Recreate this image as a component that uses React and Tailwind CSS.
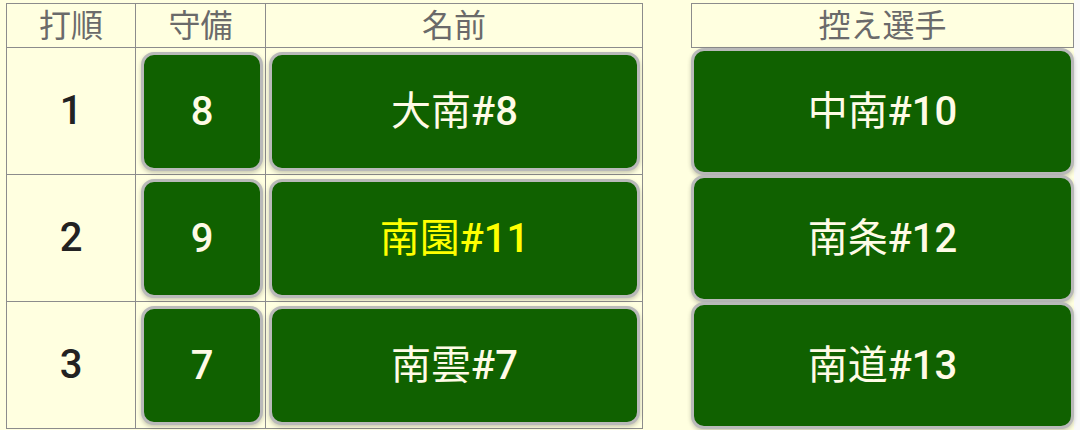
import React from 'react';

const font = { fontFamily: 'Roboto, "Noto Sans CJK JP", sans-serif' };

const lineup = [
  { order: 1, pos: '8', name: '大南#8' },
  { order: 2, pos: '9', name: '南園#11', active: true },
  { order: 3, pos: '7', name: '南雲#7' },
];

const bench = ['中南#10', '南条#12', '南道#13'];

// 漢字は細め、番号は少し太め
const Label = ({ text }) => {
  const i = text.indexOf('#');
  if (i < 0) return <span className="font-medium">{text}</span>;
  return (
    <>
      <span className="font-normal">{text.slice(0, i)}</span>
      <span className="font-medium">{text.slice(i)}</span>
    </>
  );
};

const Btn = ({ children, active, className = '' }) => (
  <button
    className={`flex items-center justify-center rounded-[13px] border-[3px] border-[#b9b9b9] bg-[#106100] text-[40px] shadow-[0_2px_4px_rgba(0,0,0,0.22)] ${
      active ? 'text-[#ffff00]' : 'text-[#fffbe6]'
    } ${className}`}
  >
    {children}
  </button>
);

const App = () => {
  return (
    <div className="min-h-screen bg-[#f9f9f9]" style={font}>
      <div className="flex h-[430px] w-[1074px] gap-[48px] bg-[#ffffe0] pl-[6px] pt-[3px]">
        {/* 打順表 */}
        <div className="grid h-fit grid-cols-[129px_130px_377px] border-l border-t border-[#8c8c8c]">
          {['打順', '守備', '名前'].map((h) => (
            <div
              key={h}
              className="flex h-[44px] items-center justify-center border-b border-r border-[#8c8c8c] text-[32px] font-normal leading-none text-[#6a6a6a]"
            >
              {h}
            </div>
          ))}
          {lineup.map((p) => (
            <React.Fragment key={p.order}>
              <div className="flex h-[127px] items-center justify-center border-b border-r border-[#8c8c8c] text-[40px] font-medium text-[#222]">
                {p.order}
              </div>
              <div className="flex h-[127px] border-b border-r border-[#8c8c8c] pb-[3px] pl-[5px] pr-[2px] pt-[4px]">
                <Btn className="flex-1">
                  <Label text={p.pos} />
                </Btn>
              </div>
              <div className="flex h-[127px] border-b border-r border-[#8c8c8c] pb-[3px] pl-[3px] pr-[2px] pt-[4px]">
                <Btn className="flex-1" active={p.active}>
                  <Label text={p.name} />
                </Btn>
              </div>
            </React.Fragment>
          ))}
        </div>

        {/* 控え選手 */}
        <div className="flex w-[383px] flex-col">
          <div className="flex h-[45px] items-center justify-center border border-[#8c8c8c] text-[32px] font-normal leading-none text-[#6a6a6a]">
            控え選手
          </div>
          {bench.map((b) => (
            <Btn key={b} className="h-[127px] w-full">
              <Label text={b} />
            </Btn>
          ))}
        </div>
      </div>
    </div>
  );
};

export default App;
